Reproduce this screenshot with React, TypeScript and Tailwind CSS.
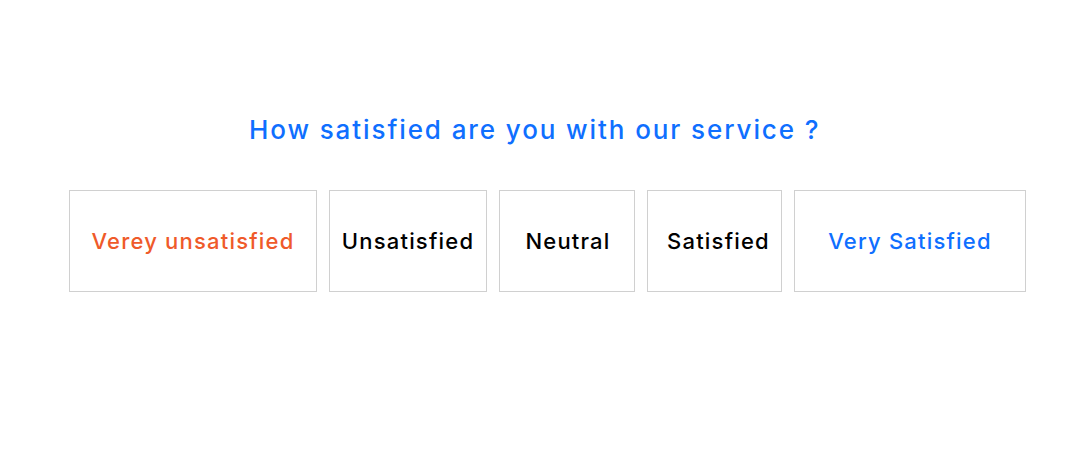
export default function App() {
  const items = [
    { label: "Verey unsatisfied", w: "w-[248px]", color: "text-[#ef5a2a]", pl: "" },
    { label: "Unsatisfied", w: "w-[158px]", color: "text-black", pl: "" },
    { label: "Neutral", w: "w-[136px]", color: "text-black", pl: "pl-[2px]" },
    { label: "Satisfied", w: "w-[135px]", color: "text-black", pl: "pl-[8px]" },
    { label: "Very Satisfied", w: "w-[232px]", color: "text-[#0f6fff]", pl: "" },
  ];
  return (
    <div
      className="w-[1080px] h-[450px] bg-white flex flex-col"
      style={{ fontFamily: "Inter, 'Noto Sans', sans-serif" }}
    >
      <h1 className="mt-[112px] pl-[249px] text-[26px] leading-[36px] tracking-[1.9px] text-[#0f6fff] font-medium whitespace-nowrap">
        How satisfied are you with our service ?
      </h1>
      <div className="mt-[42px] pl-[69px] flex gap-[12px]">
        {items.map((it) => (
          <div
            key={it.label}
            className={`${it.w} h-[102px] border border-[#d0d0d0] flex items-center justify-center text-[22px] tracking-[1.2px] font-medium whitespace-nowrap ${it.pl} ${it.color}`}
          >
            {it.label}
          </div>
        ))}
      </div>
    </div>
  );
}
